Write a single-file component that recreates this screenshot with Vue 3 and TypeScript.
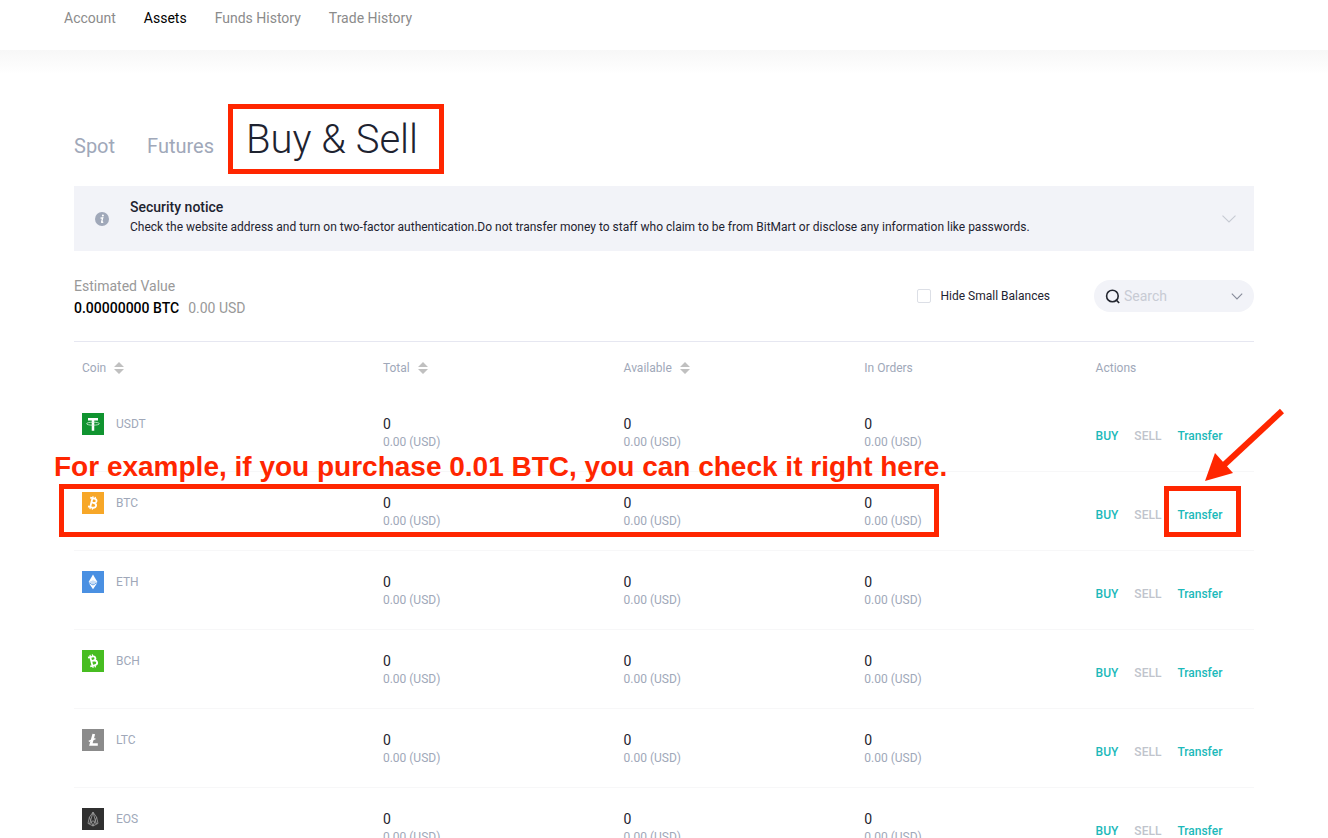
<script setup lang="ts">
import { ref } from 'vue'

interface Coin {
  code: string
  color: string
}

const navItems = ['Account', 'Assets', 'Funds History', 'Trade History']
const activeNav = 'Assets'

const columns = [
  { label: 'Coin', sortable: true },
  { label: 'Total', sortable: true },
  { label: 'Available', sortable: true },
  { label: 'In Orders', sortable: false },
  { label: 'Actions', sortable: false },
]

const coins: Coin[] = [
  { code: 'USDT', color: '#109430' },
  { code: 'BTC', color: '#f7a728' },
  { code: 'ETH', color: '#4a90e2' },
  { code: 'BCH', color: '#47bd21' },
  { code: 'LTC', color: '#8b8b8b' },
  { code: 'EOS', color: '#303030' },
]

const hideSmall = ref(false)
const query = ref('')
</script>

<template>
  <div class="page">
    <nav class="nav">
      <a v-for="item in navItems" :key="item" href="#" :class="{ active: item === activeNav }">{{ item }}</a>
    </nav>

    <main class="content">
      <div class="tabs">
        <a href="#" class="tab">Spot</a>
        <a href="#" class="tab">Futures</a>
        <h1 class="current">Buy &amp; Sell</h1>
      </div>

      <section class="notice">
        <svg class="info" width="14" height="14" viewBox="0 0 14 14">
          <circle cx="7" cy="7" r="7" fill="#a0a8b9" />
          <circle cx="7.9" cy="3.6" r="1" fill="#fff" />
          <path d="M5.5 6.1 L7.7 5.8 L6.6 10.1 Q6.5 10.8 8.2 9.9" fill="none" stroke="#fff" stroke-width="1.3" />
        </svg>
        <div class="notice-text">
          <h2>Security notice</h2>
          <p>Check the website address and turn on two-factor authentication.Do not transfer money to staff who claim to be from BitMart or disclose any information like passwords.</p>
        </div>
        <button class="plain" type="button" aria-label="Expand notice">
          <svg width="14" height="8" viewBox="0 0 14 8">
            <path d="M0.5 0.7 L7 7 L13.5 0.7" fill="none" stroke="#c6cad3" stroke-width="1.1" />
          </svg>
        </button>
      </section>

      <section class="summary">
        <div class="estimate">
          <p class="caption">Estimated Value</p>
          <p class="value"><strong>0.00000000 BTC</strong><span>0.00 USD</span></p>
        </div>
        <label class="hide"><input v-model="hideSmall" type="checkbox" />Hide Small Balances</label>
        <div class="search">
          <svg width="15" height="15" viewBox="0 0 15 15">
            <circle cx="7.4" cy="7" r="5.8" fill="none" stroke="#23262f" stroke-width="1.6" />
            <path d="M10.8 10.6 L14.2 14" stroke="#23262f" stroke-width="1.6" />
          </svg>
          <input v-model="query" type="text" placeholder="Search" aria-label="Search coin" />
          <button class="plain" type="button" aria-label="Show coins">
            <svg width="12" height="7" viewBox="0 0 12 7">
              <path d="M0.8 0.7 L6 5.9 L11.2 0.7" fill="none" stroke="#868b99" stroke-width="1.1" />
            </svg>
          </button>
        </div>
      </section>

      <div class="table-wrap">
        <table>
          <thead>
            <tr>
              <th v-for="col in columns" :key="col.label" scope="col">
                <span class="head">
                  {{ col.label }}
                  <button v-if="col.sortable" class="plain" type="button" :aria-label="'Sort by ' + col.label">
                    <svg width="10" height="12" viewBox="0 0 10 12" fill="#c0c0c0">
                      <path d="M0 5 L5 0 L10 5 Z M0 7 L5 12 L10 7 Z" />
                    </svg>
                  </button>
                </span>
              </th>
            </tr>
          </thead>
          <tbody>
            <tr v-for="coin in coins" :key="coin.code">
              <td>
                <span class="coin">
                  <svg width="22" height="22" viewBox="0 0 22 22">
                    <rect width="22" height="22" :fill="coin.color" />
                    <g v-if="coin.code === 'USDT'" fill="none" stroke="#fff">
                      <path d="M6 6.3 H16 M11 6 V17.8" stroke-width="2.5" />
                      <ellipse cx="11" cy="10.7" rx="6.4" ry="1.5" stroke-width="0.8" stroke="#d5efdb" />
                    </g>
                    <g v-else-if="coin.code === 'BTC'" transform="rotate(14 11 11)" fill="none" stroke="#fff">
                      <path d="M7 6.5 H11.3 Q14 6.5 14 8.6 Q14 10.8 11.3 10.8 H9.4 M11.3 10.8 Q14.7 10.8 14.7 13.2 Q14.7 15.6 11.3 15.6 H7 M9.3 6.5 V15.6" stroke-width="1.8" />
                      <path d="M9.5 4.4 V6.5 M11.9 4.4 V6.5 M9.5 15.6 V17.7 M11.9 15.6 V17.7" stroke-width="1.2" />
                    </g>
                    <g v-else-if="coin.code === 'ETH'">
                      <path d="M11 3.4 L15.4 11 L11 13.6 L6.6 11 Z" fill="#fff" />
                      <path d="M6.6 11 L11 9.2 L15.4 11 L11 13.6 Z" fill="#c7ddf6" />
                      <path d="M6.8 12.1 L11 14.5 L15.2 12.1 L11 18.3 Z" fill="#fff" />
                    </g>
                    <g v-else-if="coin.code === 'BCH'" transform="rotate(-14 11 11)" fill="none" stroke="#fff">
                      <path d="M7 6.5 H11.3 Q14 6.5 14 8.6 Q14 10.8 11.3 10.8 H9.4 M11.3 10.8 Q14.7 10.8 14.7 13.2 Q14.7 15.6 11.3 15.6 H7 M9.3 6.5 V15.6" stroke-width="1.8" />
                      <path d="M9.5 4.4 V6.5 M11.9 4.4 V6.5 M9.5 15.6 V17.7 M11.9 15.6 V17.7" stroke-width="1.2" />
                    </g>
                    <g v-else-if="coin.code === 'LTC'" fill="none" stroke="#fff">
                      <path d="M11.8 5 L8.9 15.5 H15.8" stroke-width="2.7" />
                      <path d="M6.8 12.4 L13.4 9.6" stroke-width="1.4" />
                    </g>
                    <g v-else fill="none" stroke="#a2a2a2" stroke-width="0.8">
                      <path d="M11 4.2 L7.4 9.2 L6 15.4 L11 18 L16 15.4 L14.6 9.2 Z M11 4.2 L7.6 16 M11 4.2 L14.4 16 M7.4 9.2 L11 18 L14.6 9.2 M8 15.6 L11 12.6 L14 15.6" />
                    </g>
                  </svg>
                  {{ coin.code }}
                </span>
              </td>
              <td v-for="n in 3" :key="n">
                <div class="amount">0</div>
                <div class="fiat">0.00 (USD)</div>
              </td>
              <td>
                <div class="actions">
                  <a href="#">BUY</a>
                  <a href="#" class="muted">SELL</a>
                  <a href="#">Transfer</a>
                </div>
              </td>
            </tr>
          </tbody>
        </table>

        <p class="callout">For example, if you purchase 0.01 BTC, you can check it right here.</p>
        <div class="mark mark-row"></div>
        <div class="mark mark-transfer"></div>
        <svg class="arrow" width="80" height="74" viewBox="0 0 80 74">
          <path d="M78 3 L20 57" stroke="#ff2600" stroke-width="6" />
          <path d="M1 73 L11 45 L29 65 Z" fill="#ff2600" />
        </svg>
      </div>
    </main>
  </div>
</template>

<style>
body {
  margin: 0;
  background: #fff;
}
</style>

<style scoped>
.page {
  height: 100vh;
  overflow: hidden;
  font-family: Roboto, "Liberation Sans", sans-serif;
  font-size: 12px;
  color: #1e2330;
}
a {
  color: inherit;
  text-decoration: none;
}
h1,
h2,
p {
  margin: 0;
  font-weight: 400;
}
.plain {
  display: flex;
  padding: 0;
  border: 0;
  background: none;
}
.nav {
  display: flex;
  gap: 28px;
  height: 50px;
  padding: 0 64px;
  box-sizing: border-box;
  font-size: 14px;
  line-height: 36px;
  color: #8b8b8b;
}
.nav .active {
  color: #000;
}
.content {
  padding: 62px 74px 0;
  background: linear-gradient(#f7f7f7, #fff 24px);
}
.tabs {
  display: flex;
  align-items: baseline;
  height: 74px;
  font-size: 20px;
  line-height: 56px;
  color: #a0a8b9;
}
.tab {
  margin-right: 32px;
}
.current {
  position: relative;
  font-size: 40px;
  font-weight: 300;
  color: #1e2330;
}
.current::before {
  content: "";
  position: absolute;
  inset: -8px -26px -6px -18px;
  border: 5px solid #ff2600;
}
.notice {
  display: flex;
  align-items: center;
  height: 65px;
  padding: 0 18px 0 21px;
  box-sizing: border-box;
  background: #f2f3f8;
}
.notice-text {
  flex: 1;
  margin-left: 21px;
  padding-bottom: 3px;
}
.notice h2 {
  font-size: 14px;
  font-weight: 500;
  line-height: 20px;
}
.notice p {
  line-height: 20px;
}
.summary {
  display: flex;
  align-items: center;
  height: 90px;
  border-bottom: 1px solid #e6e7f1;
}
.estimate {
  flex: 1;
  padding-top: 2px;
  font-size: 14px;
  line-height: 22px;
  color: #999;
}
.value strong {
  margin-right: 9px;
  font-weight: 500;
  color: #000;
}
.hide {
  display: flex;
  align-items: center;
  gap: 10px;
}
.hide input {
  appearance: none;
  width: 14px;
  height: 14px;
  margin: 0;
  border: 1px solid #dcdfe6;
  border-radius: 2px;
  background: #fff;
}
.search {
  display: flex;
  align-items: center;
  width: 160px;
  height: 32px;
  margin-left: 44px;
  padding: 0 11px;
  box-sizing: border-box;
  border-radius: 16px;
  background: #f2f3f8;
}
.search input {
  flex: 1;
  min-width: 0;
  padding: 0 4px;
  border: 0;
  background: none;
  font: 14px Roboto, sans-serif;
}
.search input::placeholder {
  color: #c8cbd4;
}
.table-wrap {
  position: relative;
}
table {
  width: 100%;
  table-layout: fixed;
  border-collapse: separate;
  border-spacing: 0;
}
th,
td {
  box-sizing: border-box;
  padding: 0 8px;
  text-align: left;
}
th {
  height: 51px;
  font-weight: 400;
  color: #a0a8b9;
}
th:nth-child(1) {
  width: 25.5%;
}
th:nth-child(2),
th:nth-child(3) {
  width: 20.4%;
}
th:nth-child(4) {
  width: 19.6%;
}
.head {
  display: flex;
  align-items: center;
  gap: 8px;
}
td {
  height: 79px;
  border-bottom: 1px solid #f7f7f8;
}
.coin {
  display: flex;
  align-items: center;
  gap: 12px;
  margin-bottom: 16px;
  color: #a0a8b9;
}
.amount {
  margin-top: 2px;
  font-size: 14px;
  line-height: 18px;
}
.fiat {
  line-height: 18px;
  color: #a0a8b9;
}
.actions {
  display: flex;
  gap: 16px;
  margin-top: 8px;
  font-weight: 500;
  color: #1cb9ba;
}
.actions .muted {
  color: #c0c4cc;
}
.callout {
  position: absolute;
  top: 108px;
  left: -20px;
  font: bold 28px/34px "Liberation Sans", Arial, sans-serif;
  color: #ff2600;
  white-space: nowrap;
}
.mark {
  position: absolute;
  box-sizing: border-box;
  border: 5px solid #ff2600;
}
.mark-row {
  top: 142px;
  left: -15px;
  right: 315px;
  height: 53px;
}
.mark-transfer {
  top: 144px;
  right: 13px;
  width: 77px;
  height: 51px;
}
.arrow {
  position: absolute;
  top: 66px;
  right: -30px;
}
</style>
